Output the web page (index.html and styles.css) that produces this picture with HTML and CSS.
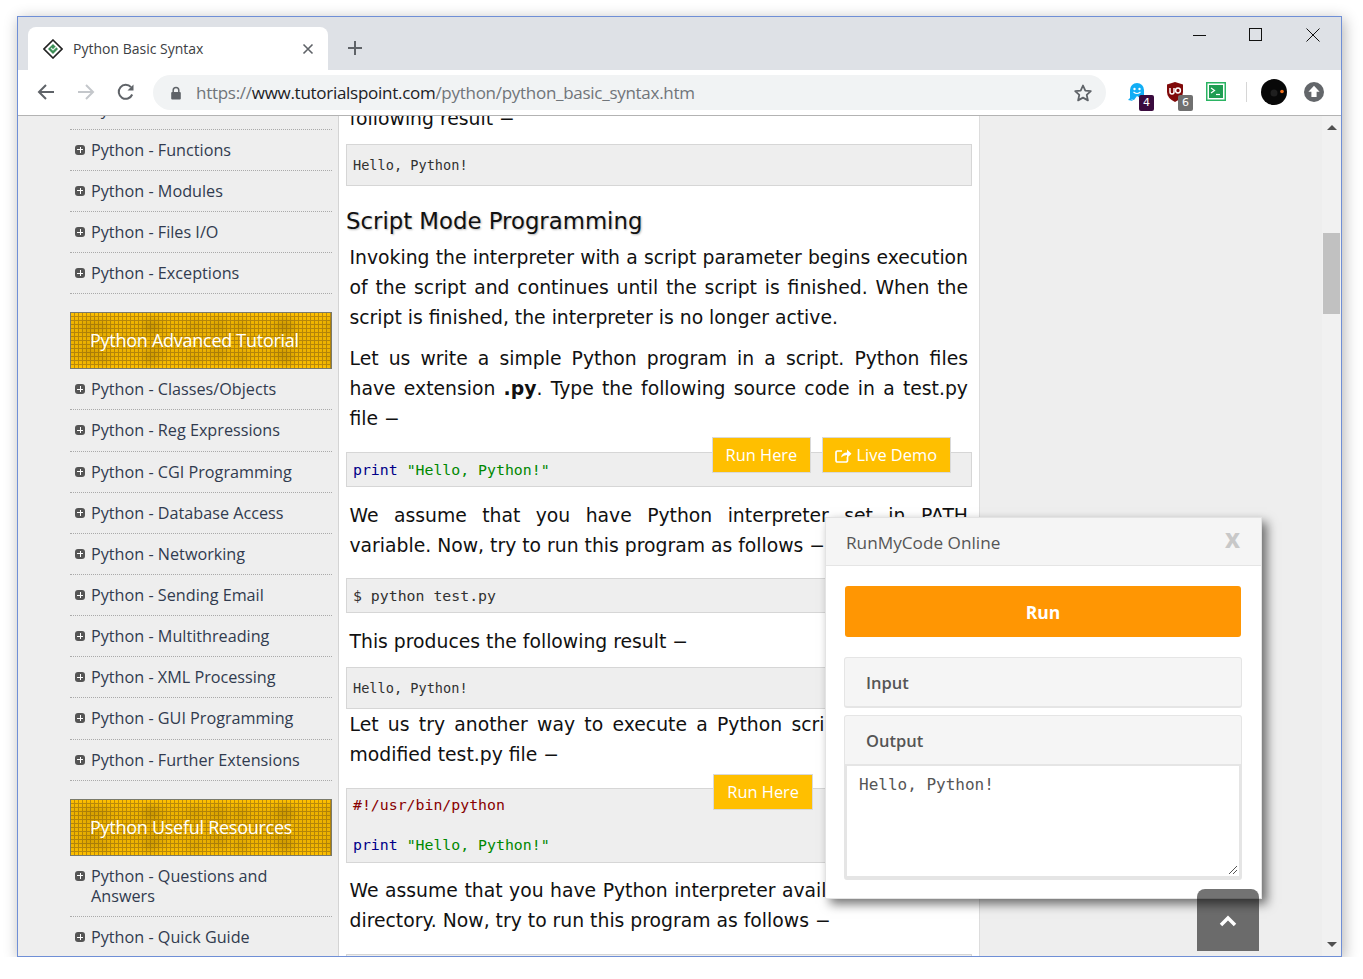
FILE: index.html
```html
<!DOCTYPE html>
<html lang="en">
<head>
  <meta charset="UTF-8">
  <link rel="stylesheet" href="styles.css">
  <title>Python Basic Syntax</title>
</head>
<body>
  <div class="window">
    <div class="tabstrip">
      <div class="tab">
        <svg class="favicon" width="20" height="20" viewBox="0 0 20 20">
          <path d="M10 1 L19 10 L10 19 L1 10 Z" fill="#fff" stroke="#222" stroke-width="1.6"/>
          <path d="M10 5 L15 10 L10 15 L5 10 Z" fill="#3c8f57"/>
          <path d="M8 9 L10 11 L13 8" fill="none" stroke="#dff0e4" stroke-width="1.2"/>
        </svg>
        <span class="tab-title">Python Basic Syntax</span>
        <svg class="tab-close" width="12" height="12" viewBox="0 0 12 12"><path d="M1.5 1.5 L10.5 10.5 M10.5 1.5 L1.5 10.5" stroke="#5f6368" stroke-width="1.6"/></svg>
      </div>
      <svg class="new-tab" width="16" height="16" viewBox="0 0 16 16"><path d="M8 1 V15 M1 8 H15" stroke="#5f6368" stroke-width="2"/></svg>
      <div class="win-controls">
        <svg class="win-min" width="14" height="14" viewBox="0 0 14 14"><path d="M0 7.5 H13" stroke="#111" stroke-width="1"/></svg>
        <svg width="14" height="14" viewBox="0 0 14 14"><rect x="0.5" y="0.5" width="12" height="12" fill="none" stroke="#111"/></svg>
        <svg width="14" height="14" viewBox="0 0 14 14"><path d="M0.5 0.5 L13.5 13.5 M13.5 0.5 L0.5 13.5" stroke="#111" stroke-width="1"/></svg>
      </div>
    </div>

    <div class="toolbar">
      <svg class="nav-btn" width="18" height="18" viewBox="0 0 18 18"><path d="M17 9 H2 M9 2 L2 9 L9 16" fill="none" stroke="#5f6368" stroke-width="2"/></svg>
      <svg class="nav-btn" width="18" height="18" viewBox="0 0 18 18"><path d="M1 9 H16 M9 2 L16 9 L9 16" fill="none" stroke="#c4c7cb" stroke-width="2"/></svg>
      <svg class="nav-btn" width="18" height="18" viewBox="0 0 18 18"><path d="M15.2 11.5 A7 7 0 1 1 14 4.2" fill="none" stroke="#5f6368" stroke-width="2"/><path d="M16.5 1.5 V7.5 H10.5 Z" fill="#5f6368"/></svg>
      <div class="omnibox">
        <svg class="lock" width="12" height="14" viewBox="0 0 12 14"><path d="M3.2 6 V4.2 A2.8 2.8 0 0 1 8.8 4.2 V6" fill="none" stroke="#5f6368" stroke-width="1.5"/><rect x="1.2" y="6" width="9.6" height="7.5" rx="1" fill="#5f6368"/></svg>
        <span class="url">https://<b>www.tutorialspoint.com</b>/python/python_basic_syntax.htm</span>
        <svg width="20" height="20" viewBox="0 0 20 20"><path d="M10 2.5 L12.3 7.6 L17.8 8.2 L13.7 11.9 L14.9 17.4 L10 14.6 L5.1 17.4 L6.3 11.9 L2.2 8.2 L7.7 7.6 Z" fill="none" stroke="#5f6368" stroke-width="1.8" stroke-linejoin="round"/></svg>
      </div>
      <div class="extensions">
        <div class="ext ext-ghost">
          <svg width="20" height="22" viewBox="0 0 20 22"><path d="M3 18 V9 A7 7 0 0 1 17 9 V15 L13 17 L10 15 L7 19 Z" fill="#12aef5"/><path d="M3 17 L1 19 L6 20 Z" fill="#12aef5"/><circle cx="7.5" cy="8" r="1.2" fill="#fff"/><circle cx="12.5" cy="8" r="1.2" fill="#fff"/><path d="M6.5 11 Q10 14 13.5 11" fill="none" stroke="#fff" stroke-width="1.2"/></svg>
          <span class="badge badge-purple">4</span>
        </div>
        <div class="ext ext-shield">
          <svg width="20" height="22" viewBox="0 0 20 22"><path d="M10 1 L18 3.5 V11 Q18 17 10 21 Q2 17 2 11 V3.5 Z" fill="#800a0a"/><path d="M5 7 V11 A2 2 0 0 0 9 11 V7" fill="none" stroke="#fff" stroke-width="1.5"/><circle cx="13" cy="9.5" r="2.4" fill="none" stroke="#fff" stroke-width="1.5"/></svg>
          <span class="badge badge-gray">6</span>
        </div>
        <svg class="terminal" width="20" height="19" viewBox="0 0 20 19"><rect width="20" height="19" fill="#2bb463"/><rect x="1.5" y="1.5" width="17" height="16" fill="#fff"/><rect x="3" y="3" width="14" height="13" fill="#1f9d52"/><path d="M5 6 L8.5 8.5 L5 11" fill="none" stroke="#fff" stroke-width="1.2"/><path d="M10 12.5 H14" stroke="#fff" stroke-width="1.2"/></svg>
        <div class="ext-sep"></div>
        <svg class="avatar" width="26" height="26" viewBox="0 0 26 26"><circle cx="13" cy="13" r="13" fill="#080808"/><circle cx="21" cy="12.5" r="1.8" fill="#f2701d"/><circle cx="13" cy="14" r="3.5" fill="#1f1f1f"/></svg>
        <svg class="sync" width="20" height="20" viewBox="0 0 20 20"><circle cx="10" cy="10" r="10" fill="#63666a"/><path d="M10 3.8 L15.6 9.8 H12.6 V15 H7.4 V9.8 H4.4 Z" fill="#fff"/></svg>
      </div>
    </div>

    <div class="content">
      <aside class="sidebar">
        <ul class="side-list side-list-first">
          <li>Python - Date &amp; Time</li>
          <li>Python - Functions</li>
          <li>Python - Modules</li>
          <li>Python - Files I/O</li>
          <li>Python - Exceptions</li>
        </ul>
        <div class="side-head">Python Advanced Tutorial</div>
        <ul class="side-list">
          <li>Python - Classes/Objects</li>
          <li>Python - Reg Expressions</li>
          <li>Python - CGI Programming</li>
          <li>Python - Database Access</li>
          <li>Python - Networking</li>
          <li>Python - Sending Email</li>
          <li>Python - Multithreading</li>
          <li>Python - XML Processing</li>
          <li>Python - GUI Programming</li>
          <li>Python - Further Extensions</li>
        </ul>
        <div class="side-head">Python Useful Resources</div>
        <ul class="side-list">
          <li>Python - Questions and Answers</li>
          <li>Python - Quick Guide</li>
        </ul>
      </aside>

      <main class="article">
        <p class="cut-top">following result −</p>
        <pre class="result">Hello, Python!</pre>
        <h2>Script Mode Programming</h2>
        <p>Invoking the interpreter with a script parameter begins execution of the script and continues until the script is finished. When the script is finished, the interpreter is no longer active.</p>
        <p>Let us write a simple Python program in a script. Python files have extension <b>.py</b>. Type the following source code in a test.py file −</p>
        <pre class="code"><span class="kw">print</span> <span class="str">"Hello, Python!"</span><div class="code-btns"><a class="btn">Run Here</a><a class="btn"><svg class="demo-icon" width="17" height="15" viewBox="0 0 17 15"><path d="M12.5 9 V12.5 A1.5 1.5 0 0 1 11 14 H2.5 A1.5 1.5 0 0 1 1 12.5 V4.5 A1.5 1.5 0 0 1 2.5 3 H7" fill="none" stroke="#fff" stroke-width="1.7"/><path d="M6 9.5 Q7 4.5 12 4.5 V1.5 L16.5 5.8 L12 10 V7 Q8.5 7 6 9.5 Z" fill="#fff"/></svg> Live Demo</a></div></pre>
        <p>We assume that you have Python interpreter set in PATH variable. Now, try to run this program as follows −</p>
        <pre class="code plain">$ python test.py</pre>
        <p>This produces the following result −</p>
        <pre class="result">Hello, Python!</pre>
        <p>Let us try another way to execute a Python script. Here is the modified test.py file −</p>
        <pre class="code multi"><span class="shebang">#!/usr/bin/python</span>

<span class="kw">print</span> <span class="str">"Hello, Python!"</span><div class="code-btns code-btns-single"><a class="btn">Run Here</a></div></pre>
        <p>We assume that you have Python interpreter available in /usr/bin directory. Now, try to run this program as follows −</p>
        <pre class="code">$ chmod +x test.py</pre>
      </main>

      <div class="right-rail"></div>

      <div class="scrollbar">
        <span class="arrow-up"></span>
        <div class="thumb"></div>
        <span class="arrow-down"></span>
      </div>

      <section class="modal">
        <header class="modal-head">
          <span>RunMyCode Online</span>
          <span class="modal-x">x</span>
        </header>
        <div class="modal-body">
          <div class="run-btn">Run</div>
          <div class="panel panel-input">Input</div>
          <div class="panel">
            <div class="panel-title">Output</div>
            <div class="output-box">Hello, Python!
              <svg class="grip" width="10" height="10" viewBox="0 0 10 10"><path d="M1 9 L9 1 M5 9 L9 5" stroke="#555" stroke-width="1"/></svg>
            </div>
          </div>
        </div>
      </section>

      <div class="to-top">
        <svg width="18" height="12" viewBox="0 0 18 12"><path d="M2 10 L9 3 L16 10" fill="none" stroke="#fff" stroke-width="3.5"/></svg>
      </div>
    </div>
  </div>
</body>
</html>
```

FILE: styles.css
```css
* {
  box-sizing: border-box;
}

body {
  margin: 0;
  background: #fff;
  font-family: "Open Sans", sans-serif;
  overflow: hidden;
}

.window {
  display: flex;
  flex-direction: column;
  width: 1325px;
  height: 941px;
  margin: 16px 0 0 17px;
  border: 1px solid #6f8fd6;
  box-shadow: 2px 3px 14px rgba(0, 0, 0, 0.3);
  overflow: hidden;
}

/* tab strip */
.tabstrip {
  display: flex;
  align-items: flex-end;
  flex: none;
  height: 53px;
  padding-left: 10px;
  background: #dee1e6;
}

.tab {
  display: flex;
  align-items: center;
  width: 300px;
  height: 43px;
  padding: 0 14px 0 15px;
  background: #fff;
  border-radius: 8px 8px 0 0;
}

.favicon {
  flex: none;
}

.tab-title {
  flex: 1;
  margin-left: 10px;
  font-size: 14px;
  color: #3c4043;
}

.new-tab {
  margin: 0 0 14px 19px;
}

.win-controls {
  display: flex;
  gap: 43px;
  margin: 0 21px 28px auto;
}

.win-min {
  margin-right: -1px;
}

/* toolbar */
.toolbar {
  display: flex;
  align-items: center;
  flex: none;
  height: 46px;
  padding: 0 0 2px 19px;
  background: #fff;
  border-bottom: 1px solid #b3b3b3;
}

.nav-btn {
  margin-right: 22px;
}

.omnibox {
  display: flex;
  align-items: center;
  width: 953px;
  height: 35px;
  margin: 2px 0 0 -4px;
  padding: 0 13px 0 17px;
  background: #f1f3f4;
  border-radius: 18px;
}

.url {
  flex: 1;
  margin-left: 14px;
  font-size: 17px;
  letter-spacing: -0.28px;
  color: #70757a;
}

.url b {
  font-weight: 400;
  color: #202124;
}

.extensions {
  display: flex;
  align-items: center;
  margin-left: 21px;
}

.ext {
  position: relative;
  width: 20px;
  height: 22px;
}

.ext-ghost {
  margin-right: 18px;
}

.ext-shield {
  margin-right: 20px;
}

.badge {
  position: absolute;
  right: -8px;
  bottom: -8px;
  width: 15px;
  height: 16px;
  border-radius: 2px;
  font-family: "DejaVu Sans", sans-serif;
  font-size: 11px;
  line-height: 16px;
  text-align: center;
  color: #fff;
}

.badge-purple {
  right: -7px;
  background: #3a0b3e;
}

.badge-gray {
  background: #707070;
}

.terminal {
  margin-left: 1px;
}

.ext-sep {
  width: 1px;
  height: 20px;
  margin: 0 14px 0 20px;
  background: #d6d6d6;
}

.sync {
  margin-left: 17px;
}

/* page area */
.content {
  position: relative;
  display: flex;
  flex: 1;
  min-height: 0;
  overflow: hidden;
  background: #eee;
}

.sidebar {
  flex: none;
  width: 321px;
  padding: 0 6px 0 52px;
  border-right: 1px solid #d4d4d4;
  background: #eee;
}

.side-list {
  margin: 0;
  padding: 0;
  list-style: none;
}

.side-list-first {
  margin-top: -27.4px;
}

.side-list li {
  position: relative;
  padding: 10px 0 10px 21px;
  border-bottom: 1px dotted #aaa;
  font-size: 16.2px;
  line-height: 20.14px;
  color: #313b4f;
}

.side-list li::before {
  content: "";
  position: absolute;
  left: 5px;
  top: 15px;
  width: 10px;
  height: 10px;
  border-radius: 3px;
  background:
    linear-gradient(#fff, #fff) center / 6px 1px no-repeat,
    linear-gradient(#fff, #fff) center / 1px 6px no-repeat,
    #555;
}

.side-head {
  height: 57px;
  margin-top: 18px;
  padding: 15px 0 0 19px;
  border: 1px solid #7a7a6a;
  font-size: 18px;
  letter-spacing: -0.27px;
  line-height: 25px;
  color: #fff;
  background:
    radial-gradient(circle at 30% 50%, rgba(110, 80, 0, 0.18), transparent 14px) 0 0 / 64px 27px,
    radial-gradient(circle at 70% 40%, rgba(110, 80, 0, 0.15), transparent 12px) 0 0 / 46px 33px,
    linear-gradient(rgba(110, 80, 0, 0) 0, rgba(110, 80, 0, 0.12) 20%, rgba(110, 80, 0, 0.12) 80%, rgba(110, 80, 0, 0) 100%),
    repeating-linear-gradient(90deg, transparent 0, transparent 3px, #bd8c0a 3px, #bd8c0a 4px),
    repeating-linear-gradient(0deg, transparent 0, transparent 3px, #bd8c0a 3px, #bd8c0a 4px),
    #ffc000;
}

.article {
  flex: none;
  width: 641px;
  padding: 0 7px;
  border-right: 1px solid #ddd;
  background: #fff;
  font-family: "DejaVu Sans", sans-serif;
  font-size: 18.8px;
  line-height: 30px;
  color: #111;
}

.article p {
  margin: 0 0 10px;
  padding: 1px 4px 0 3.5px;
  text-align: justify;
}

.article .cut-top {
  margin-top: -13px;
}

.article h2 {
  margin: 18px 0 3px;
  font-size: 22.8px;
  font-weight: 400;
  line-height: 35px;
  color: #111;
  text-shadow: 1px 1px 2px #bbb;
}

.article pre {
  position: relative;
  margin: 18px 0 13px;
  border: 1px solid #d6d6d6;
  background: #eee;
  font-family: "DejaVu Sans Mono", monospace;
  line-height: 20px;
  color: #313131;
}

.article .code {
  padding: 7px 6px 6px;
  font-size: 14.85px;
}

.article .plain {
  margin-top: 17px;
}

.article .multi {
  margin-bottom: 12px;
  padding: 6px 6px 7px;
}

.article .result {
  margin: 10px 0 0;
  padding: 10px 6px;
  font-size: 13.6px;
}

.kw {
  color: #000088;
}

.str {
  color: #008800;
}

.shebang {
  color: #880000;
}

.code-btns {
  position: absolute;
  top: -16px;
  right: 20px;
  display: flex;
  gap: 11px;
}

.code-btns-single {
  top: -15px;
  right: 158px;
}

.btn {
  display: flex;
  align-items: center;
  height: 36px;
  padding: 0 13px;
  border: 1px solid #d9d9d9;
  background: #ffbf00;
  font-family: "Open Sans", sans-serif;
  font-size: 16.4px;
  color: #fff;
}

.demo-icon {
  margin-left: -1px;
}

.right-rail {
  flex: 1;
}

.scrollbar {
  display: flex;
  flex-direction: column;
  align-items: center;
  flex: none;
  width: 19px;
  padding-top: 9px;
  background: #f1f1f1;
}

.arrow-up {
  border: 5px solid transparent;
  border-top: 0;
  border-bottom-color: #505050;
}

.arrow-down {
  margin-top: auto;
  margin-bottom: 9px;
  border: 5px solid transparent;
  border-bottom: 0;
  border-top-color: #505050;
}

.thumb {
  width: 17px;
  height: 81px;
  margin-top: 103px;
  background: #c1c1c1;
}

/* floating dialog */
.modal {
  position: absolute;
  left: 807px;
  top: 401px;
  width: 437px;
  height: 382px;
  border: 1px solid #e3e3e3;
  background: #fff;
  box-shadow: 5px 5px 10px rgba(0, 0, 0, 0.55);
  color: #555;
}

.modal-head {
  display: flex;
  justify-content: space-between;
  align-items: center;
  height: 48px;
  padding: 1px 21px 0 20px;
  border-bottom: 1px solid #e5e5e5;
  background: #f5f5f5;
  font-size: 17.2px;
  font-weight: 500;
}

.modal-x {
  margin-bottom: 8px;
  font-size: 26px;
  font-weight: 700;
  line-height: 30px;
  color: #c8c8c8;
}

.modal-body {
  padding: 20px 19px 0 18px;
}

.run-btn {
  height: 51px;
  margin: 0 1px 20px;
  border-radius: 3px;
  background: #ff9603;
  font-size: 17.5px;
  font-weight: 700;
  line-height: 53px;
  text-align: center;
  color: #fff;
}

.panel {
  margin-bottom: 7px;
  border: 1px solid #e5e5e5;
  border-bottom-width: 2px;
  border-radius: 3px;
  background: #f5f5f5;
  font-size: 16.5px;
  font-weight: 600;
}

.panel-input {
  height: 51px;
  padding: 0 21px;
  line-height: 50px;
}

.panel-title {
  height: 48px;
  padding: 0 21px;
  line-height: 50px;
}

.output-box {
  position: relative;
  height: 114px;
  padding: 7px 12px;
  border: 2px solid #e5e5e5;
  background: #fff;
  font-family: "DejaVu Sans Mono", monospace;
  font-size: 16px;
  font-weight: 400;
  line-height: 24px;
  color: #555;
}

.grip {
  position: absolute;
  right: 1px;
  bottom: 1px;
}

.to-top {
  position: absolute;
  left: 1179px;
  top: 773px;
  display: flex;
  align-items: center;
  justify-content: center;
  width: 62px;
  height: 62px;
  padding-top: 2px;
  border-radius: 8px 8px 0 0;
  background: rgba(0, 0, 0, 0.55);
}
```
